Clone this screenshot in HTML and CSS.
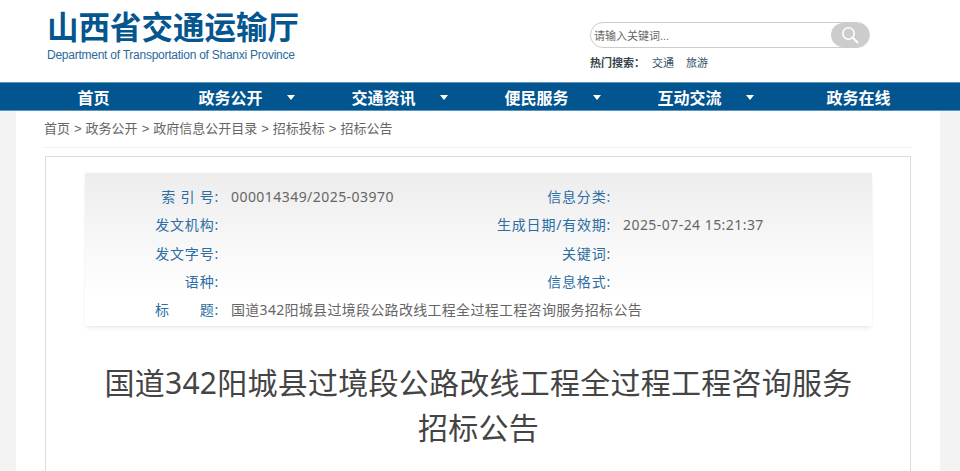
FILE: index.html
```html
<!DOCTYPE html>
<html lang="zh">
<head>
  <meta charset="utf-8">
  <title>招标公告</title>
  <link rel="stylesheet" href="styles.css">
</head>
<body>
  <div class="header">
    <div class="logo">
      <div class="logo-name">山西省交通运输厅</div>
      <div class="logo-en">Department of Transportation of Shanxi Province</div>
    </div>
    <div class="search">
      <div class="search-box">
        <span class="search-hint">请输入关键词...</span>
        <span class="search-button">
          <svg width="20" height="20" viewBox="0 0 20 20" fill="none" stroke="#fff" stroke-width="1.6">
            <circle cx="8.5" cy="8.5" r="5.7"/>
            <path d="M12.8 12.8L18 18" stroke-width="2"/>
          </svg>
        </span>
      </div>
      <div class="hot-words">
        <b>热门搜索：</b>
        <span>交通</span>
        <span>旅游</span>
      </div>
    </div>
  </div>

  <div class="nav">
    <div class="nav-item">首页</div>
    <div class="nav-item">政务公开<i class="arrow"></i></div>
    <div class="nav-item">交通资讯<i class="arrow"></i></div>
    <div class="nav-item">便民服务<i class="arrow"></i></div>
    <div class="nav-item">互动交流<i class="arrow"></i></div>
    <div class="nav-item">政务在线</div>
  </div>

  <div class="page">
    <div class="crumbs">首页 &gt; 政务公开 &gt; 政府信息公开目录 &gt; 招标投标 &gt; 招标公告</div>
    <div class="article">
      <div class="meta">
        <div class="meta-row">
          <span class="meta-label">索 引 号:</span><span class="meta-value">000014349/2025-03970</span>
          <span class="meta-label">信息分类:</span><span class="meta-value"></span>
        </div>
        <div class="meta-row">
          <span class="meta-label">发文机构:</span><span class="meta-value"></span>
          <span class="meta-label">生成日期/有效期:</span><span class="meta-value">2025-07-24 15:21:37</span>
        </div>
        <div class="meta-row">
          <span class="meta-label">发文字号:</span><span class="meta-value"></span>
          <span class="meta-label">关键词:</span><span class="meta-value"></span>
        </div>
        <div class="meta-row">
          <span class="meta-label">语种:</span><span class="meta-value"></span>
          <span class="meta-label">信息格式:</span><span class="meta-value"></span>
        </div>
        <div class="meta-row">
          <span class="meta-label meta-title-label"><span>标</span><span>题:</span></span>
          <span class="meta-value meta-title">国道342阳城县过境段公路改线工程全过程工程咨询服务招标公告</span>
        </div>
      </div>
      <h1 class="title">国道342阳城县过境段公路改线工程全过程工程咨询服务招标公告</h1>
    </div>
  </div>
</body>
</html>
```

FILE: styles.css
```css
* {
  margin: 0;
  padding: 0;
  box-sizing: border-box;
}

html,
body {
  height: 471px;
  overflow: hidden;
}

body {
  font-family: "Liberation Sans", "Noto Sans CJK SC", sans-serif;
  background-color: #f3f3f3;
  color: #444444;
}

.header {
  display: flex;
  justify-content: space-between;
  height: 82px;
  padding: 6px 90px 0 47px;
  background-color: #ffffff;
}

.logo-name {
  font-family: "Noto Sans CJK SC", sans-serif;
  font-size: 31.5px;
  font-weight: bold;
  line-height: 38px;
  color: #05558f;
}

.logo-en {
  margin-top: 3px;
  font-size: 12px;
  line-height: 16px;
  color: #2b6a9c;
  letter-spacing: -0.25px;
}

.search {
  width: 280px;
  padding-top: 16px;
}

.search-box {
  display: flex;
  justify-content: space-between;
  align-items: center;
  height: 26px;
  border: 1px solid #cccccc;
  border-radius: 13px;
  background-color: #ffffff;
}

.search-hint {
  padding-left: 3px;
  font-size: 11px;
  color: #666666;
}

.search-button {
  display: flex;
  justify-content: center;
  align-items: center;
  width: 38px;
  height: 24px;
  border-radius: 12px;
  background-color: #cccccc;
}

.hot-words {
  display: flex;
  gap: 12px;
  margin-top: 7px;
  font-size: 11px;
  line-height: 16px;
  color: #2f4f68;
}

.hot-words b {
  width: 50px;
  color: #333f4a;
  white-space: nowrap;
}

.nav {
  display: grid;
  grid-template-columns: repeat(6, 153px);
  height: 29px;
  padding-left: 17px;
  background-color: #03558f;
  border-top: 1px solid #5b94bd;
  border-bottom: 1px solid #5b94bd;
}

.nav-item {
  display: flex;
  justify-content: center;
  align-items: center;
  gap: 24px;
  font-size: 16px;
  font-weight: bold;
  color: #ffffff;
}

.arrow {
  width: 0;
  height: 0;
  margin-top: 2px;
  border-top: 5px solid #ffffff;
  border-left: 4px solid transparent;
  border-right: 4px solid transparent;
}

.page {
  width: 924px;
  height: 360px;
  margin-left: 16px;
  padding: 0 29px 0 28px;
  background-color: #ffffff;
}

.crumbs {
  height: 37px;
  border-bottom: 1px solid #f1f1f1;
  font-size: 13px;
  line-height: 36px;
  word-spacing: 0.4px;
  color: #666666;
}

.article {
  height: 315px;
  margin: 8px 0 0 1px;
  padding: 16px 38px 0 39px;
  border: 1px solid #dddddd;
  border-bottom: none;
}

.meta {
  height: 153px;
  padding-top: 10px;
  background: linear-gradient(#ededed, #ffffff 80%);
  box-shadow: 0 4px 5px -2px rgba(0, 0, 0, 0.08), 0 0 2px rgba(0, 0, 0, 0.06);
  font-family: "Noto Sans", "Noto Sans CJK SC", sans-serif;
  font-size: 14px;
}

.meta-row {
  display: grid;
  grid-template-columns: 134px 254px 114px 1fr;
  column-gap: 12px;
  height: 28.25px;
  line-height: 28px;
}

.meta-label {
  text-align: right;
  color: #2c6da3;
  white-space: nowrap;
  letter-spacing: 0.8px;
}

.meta-value {
  color: #666666;
  white-space: nowrap;
  letter-spacing: 0.45px;
}

.meta-title-label {
  display: flex;
  justify-content: space-between;
  padding-left: 70px;
  text-align: left;
}

.meta-title {
  grid-column: span 3;
  letter-spacing: 0.3px;
}

.title {
  width: 760px;
  margin: 34px auto 0;
  font-family: "Noto Sans", "Noto Sans CJK SC", sans-serif;
  font-size: 30px;
  font-weight: normal;
  line-height: 45px;
  letter-spacing: 0.25px;
  text-align: center;
  color: #444444;
}
```
